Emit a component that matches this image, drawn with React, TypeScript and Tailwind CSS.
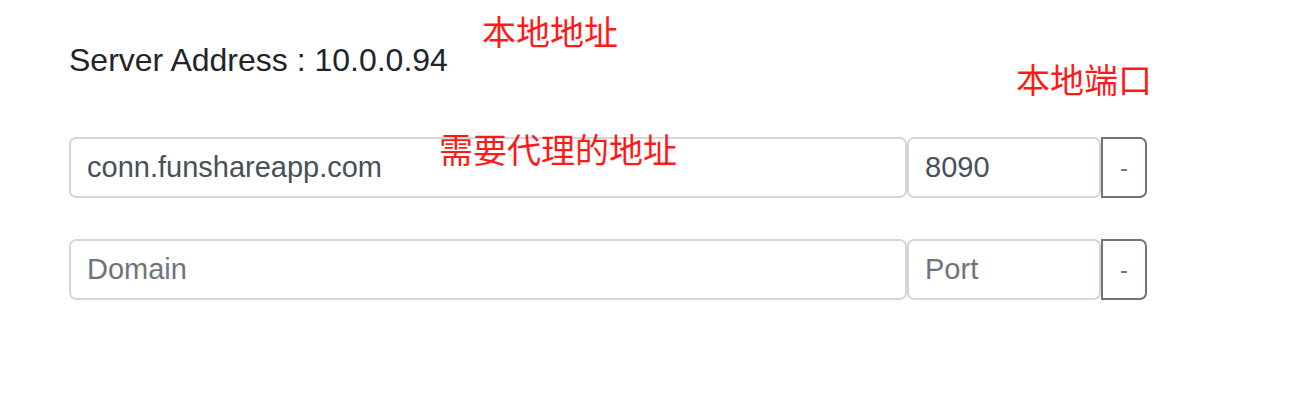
import React from 'react';

const rows = [
  { domain: 'conn.funshareapp.com', port: '8090' },
  { domain: '', port: '' },
];

const App: React.FC = () => {
  return (
    <div className="relative w-[1304px] h-[408px] bg-white font-['Liberation_Sans',sans-serif]">
      <div className="pl-[69px] pt-[42px]">
        <h5 className="text-[32px] leading-[37px] text-[#212529]">Server Address : 10.0.0.94</h5>
        <div className="mt-[58px] flex flex-col gap-[41px]">
          {rows.map((r, i) => (
            <div key={i} className="flex h-[61px]">
              <input
                className="w-[838px] h-full border-2 border-[#d3d6da] rounded-[7px] px-[16px] text-[29px] text-[#495057] placeholder:text-[#6c757d] outline-none"
                placeholder="Domain"
                defaultValue={r.domain}
              />
              <input
                className="w-[194px] h-full border-2 border-[#d3d6da] rounded-[7px] px-[16px] text-[29px] text-[#495057] placeholder:text-[#6c757d] outline-none"
                placeholder="Port"
                defaultValue={r.port}
              />
              <button className="w-[46px] h-full border-2 border-[#6c757d] rounded-r-[7px] text-[24px] text-[#6c757d] bg-white">
                -
              </button>
            </div>
          ))}
        </div>
      </div>

      {/* annotations */}
      <span className="absolute left-[482px] top-[11px] text-[34px] leading-[40px] text-[#ff1a1a] font-['Noto_Sans_CJK_SC',sans-serif]">
        本地地址
      </span>
      <span className="absolute left-[439px] top-[129px] text-[34px] leading-[40px] text-[#ff1a1a] font-['Noto_Sans_CJK_SC',sans-serif]">
        需要代理的地址
      </span>
      <span className="absolute left-[1016px] top-[59px] text-[34px] leading-[40px] text-[#ff1a1a] font-['Noto_Sans_CJK_SC',sans-serif]">
        本地端口
      </span>
    </div>
  );
};

export default App;
